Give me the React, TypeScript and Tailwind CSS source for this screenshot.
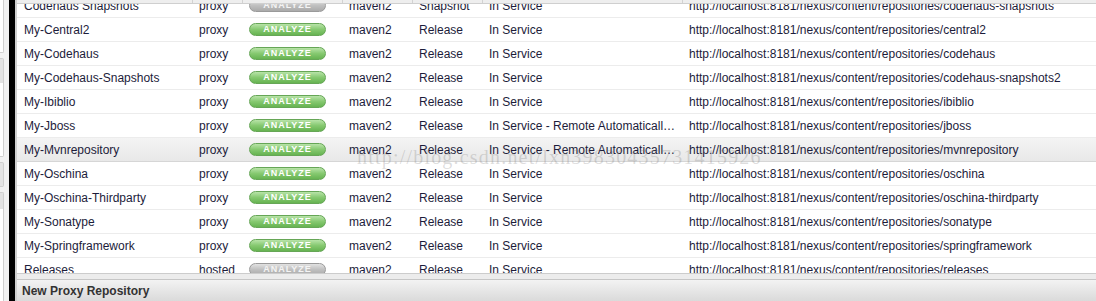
import React from 'react'

type Repo = {
  name: string
  type: string
  format: string
  policy: string
  status: string
  path: string
  active: boolean
}

const longStatus = 'In Service - Remote Automatically Blocked and Unavailable'

const repos: Repo[] = [
  { name: 'Codehaus Snapshots', type: 'proxy', format: 'maven2', policy: 'Snapshot', status: 'In Service', path: 'codehaus-snapshots', active: false },
  { name: 'My-Central2', type: 'proxy', format: 'maven2', policy: 'Release', status: 'In Service', path: 'central2', active: true },
  { name: 'My-Codehaus', type: 'proxy', format: 'maven2', policy: 'Release', status: 'In Service', path: 'codehaus', active: true },
  { name: 'My-Codehaus-Snapshots', type: 'proxy', format: 'maven2', policy: 'Release', status: 'In Service', path: 'codehaus-snapshots2', active: true },
  { name: 'My-Ibiblio', type: 'proxy', format: 'maven2', policy: 'Release', status: 'In Service', path: 'ibiblio', active: true },
  { name: 'My-Jboss', type: 'proxy', format: 'maven2', policy: 'Release', status: longStatus, path: 'jboss', active: true },
  { name: 'My-Mvnrepository', type: 'proxy', format: 'maven2', policy: 'Release', status: longStatus, path: 'mvnrepository', active: true },
  { name: 'My-Oschina', type: 'proxy', format: 'maven2', policy: 'Release', status: 'In Service', path: 'oschina', active: true },
  { name: 'My-Oschina-Thirdparty', type: 'proxy', format: 'maven2', policy: 'Release', status: 'In Service', path: 'oschina-thirdparty', active: true },
  { name: 'My-Sonatype', type: 'proxy', format: 'maven2', policy: 'Release', status: 'In Service', path: 'sonatype', active: true },
  { name: 'My-Springframework', type: 'proxy', format: 'maven2', policy: 'Release', status: 'In Service', path: 'springframework', active: true },
  { name: 'Releases', type: 'hosted', format: 'maven2', policy: 'Release', status: 'In Service', path: 'releases', active: false },
]

function AnalyzeButton({ active }: { active: boolean }) {
  return (
    <span
      className={
        active
          ? 'flex h-[13px] w-[77px] items-center justify-center rounded-full border border-[#66a656] bg-gradient-to-b from-[#b8e3a8] via-[#86c970] to-[#66b351] text-[9px] font-bold tracking-[1px] text-white'
          : 'flex h-[13px] w-[77px] items-center justify-center rounded-full border border-[#9a9a9a] bg-gradient-to-b from-[#e2e2e2] via-[#c0c0c0] to-[#aaaaaa] text-[9px] font-bold tracking-[1px] text-[#f4f4f4]'
      }
    >
      ANALYZE
    </span>
  )
}

function Row({ repo, selected }: { repo: Repo; selected: boolean }) {
  return (
    <div
      className={
        selected
          ? 'flex h-[24px] shrink-0 items-center border-b border-[#d6d6d6] bg-gradient-to-b from-[#f4f4f4] to-[#e8e8e8]'
          : 'flex h-[24px] shrink-0 items-center border-b border-[#ececec] bg-white'
      }
    >
      <div className="w-[176px] shrink-0 truncate pl-[7px]">{repo.name}</div>
      <div className="w-[50px] shrink-0 pl-[6px]">{repo.type}</div>
      <div className="w-[100px] shrink-0 pl-[6px]">
        <AnalyzeButton active={repo.active} />
      </div>
      <div className="w-[70px] shrink-0 pl-[6px]">{repo.format}</div>
      <div className="w-[70px] shrink-0 pl-[6px]">{repo.policy}</div>
      <div className="w-[200px] shrink-0 truncate pl-[6px] pr-[5px]">{repo.status}</div>
      <div className="min-w-0 flex-1 truncate pl-[6px]">
        http://localhost:8181/nexus/content/repositories/{repo.path}
      </div>
    </div>
  )
}

export default function App() {
  return (
    <div className="relative flex h-[301px] w-[1096px] overflow-hidden bg-white font-['Liberation_Sans',Arial,sans-serif] text-[12px] text-[#1c1c3a]">
      {/* left nav remnant */}
      <div className="flex w-[9px] shrink-0 flex-col gap-[5px] bg-[#f2f2f2]">
        <div className="h-[53px] w-[4px] rounded-br-[2px] border-b border-r border-[#cfcfcf] bg-white" />
        <div className="flex h-[100px] w-[4px] flex-col rounded-r-[2px] border-y border-r border-[#cfcfcf] bg-white">
          <div className="h-[24px] bg-[#e2e2e2]" />
        </div>
        <div className="h-[25px] w-[4px] rounded-r-[2px] border-y border-r border-[#cfcfcf] bg-[#e4e4e4]" />
        <div className="h-[110px] w-[4px] rounded-tr-[2px] border-t border-r border-[#cfcfcf] bg-white">
          <div className="h-[16px] bg-[#e2e2e2]" />
        </div>
      </div>
      <div className="w-[6px] shrink-0 bg-black" />
      <div className="w-[2px] shrink-0 bg-[#cfcfcf]" />

      {/* main panel */}
      <div className="flex min-w-0 flex-1 flex-col">
        <div className="flex h-[4px] shrink-0 border-b border-[#cfcfcf] bg-[#eeeeee]">
          <div className="w-[176px] shrink-0 border-r border-[#d2d2d2]" />
          <div className="w-[50px] shrink-0 border-r border-[#d2d2d2]" />
          <div className="w-[100px] shrink-0 border-r border-[#d2d2d2]" />
          <div className="w-[70px] shrink-0 border-r border-[#d2d2d2]" />
          <div className="w-[70px] shrink-0 border-r border-[#d2d2d2]" />
          <div className="w-[200px] shrink-0 border-r border-[#d2d2d2]" />
          <div className="flex-1" />
        </div>

        <div className="flex h-[269px] shrink-0 flex-col overflow-hidden">
          <div className="mt-[-10px] flex flex-col">
            {repos.map((repo, i) => (
              <Row key={repo.name} repo={repo} selected={i === 6} />
            ))}
          </div>
        </div>

        <div className="h-[6px] shrink-0 border-t border-[#cccccc] bg-[#ececec]" />
        <div className="flex flex-1 items-center border-t border-[#c6c6c6] bg-gradient-to-b from-[#f3f3f3] to-[#dadada] pl-[5px]">
          <span className="text-[12px] font-bold text-[#333]">New Proxy Repository</span>
        </div>
      </div>

      {/* blog watermark */}
      <div className="pointer-events-none absolute left-[357px] top-[145px] font-['Liberation_Serif',serif] text-[20px] leading-[24px] tracking-[1.2px] text-[rgba(120,120,120,0.26)]">
        http://blog.csdn.net/lxn39830435731415926
      </div>
    </div>
  )
}
